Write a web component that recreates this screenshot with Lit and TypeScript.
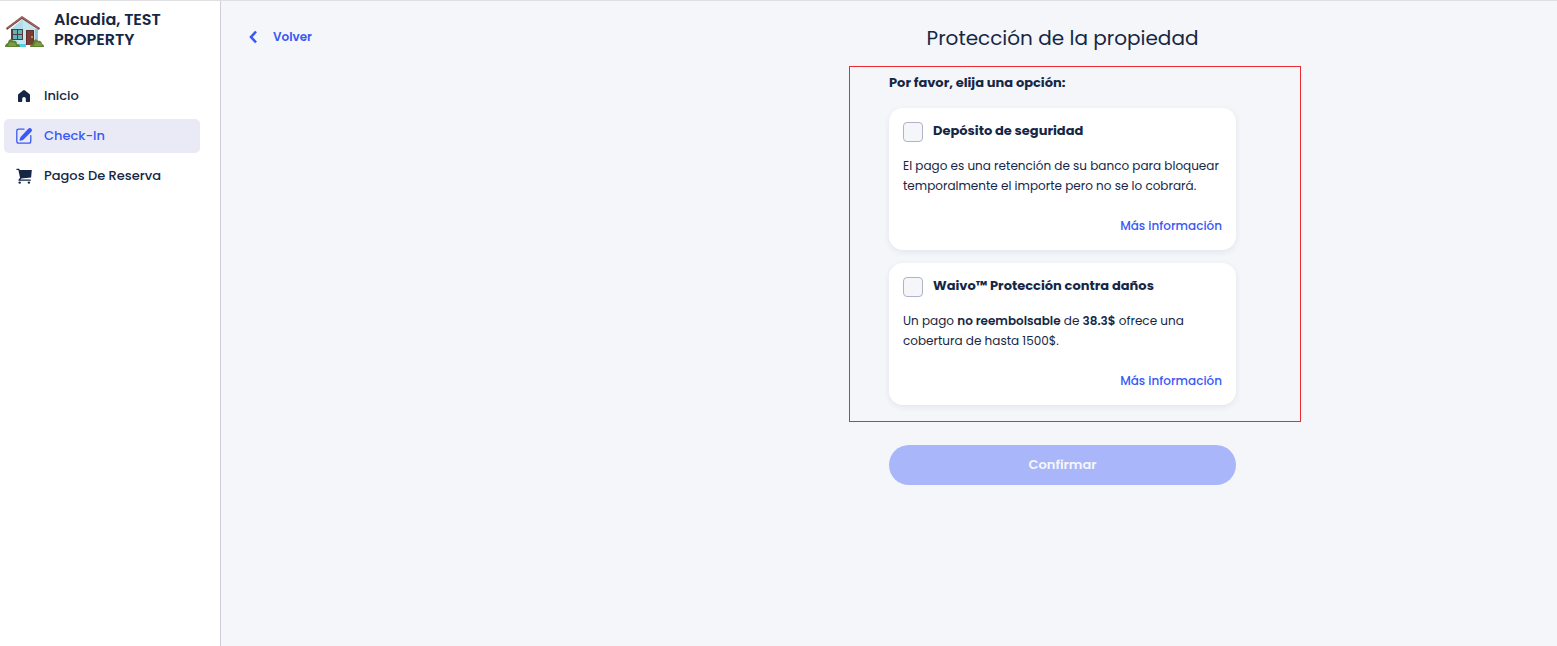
import { LitElement, html, css, svg } from "lit";
import { customElement, property } from "lit/decorators.js";

const houseLogo = svg`
  <svg class="logo" viewBox="-1 -3 40 34" aria-hidden="true">
    <path d="M6 13 18 3l15 10v16H6z" fill="#c3e6f0"/>
    <path d="M6 13 18 3v9L8 27H6z" fill="#b1dce9"/>
    <path d="M30 13h3v14h-3z" fill="#94c6d8"/>
    <path d="M12 28h9v3h-9z" fill="#54cfe6"/>
    <path d="M1 12 17 0l18 12-1 2L17 3 2 14z" fill="#804a44"/>
    <path d="M3 12 17 1l16 11" fill="none" stroke="#a86b60" stroke-width="1"/>
    <rect x="6" y="13" width="12" height="11" fill="#563b3d"/>
    <path d="M8 14h4v4H8zM13 14h4v4h-4zM8 19h4v4H8zM13 19h4v4h-4z" fill="#61b5b8"/>
    <rect x="21" y="14" width="8" height="15" fill="#5e2d2a"/>
    <rect x="22" y="15" width="6" height="14" fill="#7c3c33"/>
    <circle cx="27" cy="21" r="1" fill="#d8a65c"/>
    <path d="M0 31c0-3 2-4 3-4 0-4 4-5 5-2 3-1 4 1 4 3 2 0 3 1 3 3z" fill="#5f8132"/>
    <path d="M3 30c1-3 3-5 5-3 2-1 3 1 3 3z" fill="#7d9d42"/>
    <path d="M25 31c0-2 1-3 3-3 0-4 3-6 5-3 2-1 4 1 4 3 1 0 2 1 2 3z" fill="#5f8132"/>
    <path d="M29 30c1-4 3-5 5-3 2-1 3 1 3 3z" fill="#7d9d42"/>
  </svg>`;

const icons = {
  home: svg`<svg class="icon" viewBox="0 0 16 16" aria-hidden="true">
    <path fill="currentColor" d="M7 2.400a1.600 1.600 0 0 1 2 0l4.400 3.600c.4.300.6.800.6 1.300V13c0 .6-.4 1-1 1h-2.200c-.6 0-1-.4-1-1v-2.200a1.800 1.800 0 0 0-3.600 0V13c0 .6-.4 1-1 1H3c-.6 0-1-.4-1-1V7.300c0-.5.2-1 .6-1.300z"/>
  </svg>`,
  edit: svg`<svg class="icon" viewBox="0 0 16 16" aria-hidden="true">
    <path fill="none" stroke="currentColor" stroke-width="1.300" stroke-linecap="round" d="M8 1.200H2.700C1.600 1.200.8 2 .8 3v10.300c0 1 .8 1.900 1.900 1.900h10.200c1 0 1.900-.9 1.900-1.900V7.600"/>
    <path fill="currentColor" d="M12.200.8c.9-.9 2.300-.9 3.100-.1.900.9.900 2.200 0 3.100L7.600 11.600c-.2.200-.4.300-.6.400l-2.600.8c-.6.200-1-.3-.9-.9l.9-2.600c.1-.2.200-.4.400-.6z"/>
  </svg>`,
  cart: svg`<svg class="icon" viewBox="0 0 16 16" aria-hidden="true">
    <path fill="currentColor" d="M3.200 2H15.800L15.100 9.500 4.800 10.500z"/>
    <path fill="none" stroke="currentColor" stroke-width="1.300" stroke-linecap="round" stroke-linejoin="round" d="M.9 1.300h2L4.800 10l-1.800 2.200h11.300"/>
    <circle cx="3.700" cy="14.600" r="1.200" fill="currentColor"/>
    <circle cx="12.900" cy="14.600" r="1.200" fill="currentColor"/>
  </svg>`,
};

@customElement("protection-option")
class ProtectionOption extends LitElement {
  @property() heading = "";

  static styles = css`
    :host {
      display: block;
      padding: 14px;
      border-radius: 14px;
      background: #fff;
      box-shadow: 0 2px 6px rgba(21, 39, 69, 0.08);
    }
    .choice {
      display: flex;
      align-items: center;
      gap: 10px;
      font-size: 13px;
      font-weight: 700;
      line-height: 18px;
    }
    .choice span {
      align-self: flex-start;
    }
    .box {
      appearance: none;
      flex: none;
      box-sizing: border-box;
      width: 20px;
      height: 20px;
      margin: 0;
      border: 1px solid #b2b1c7;
      border-radius: 4px;
      background: #f5f6fa;
    }
    .box:checked {
      background: #3a5af5;
    }
    .text {
      margin: 14px 0 20px;
      font-size: 12px;
      font-weight: 400;
      line-height: 20px;
    }
    ::slotted(b) {
      font-weight: 600;
    }
    .more {
      display: block;
      width: fit-content;
      margin-left: auto;
      color: #3a5af5;
      font-size: 12px;
      font-weight: 500;
      line-height: 20px;
      text-decoration: none;
    }
  `;

  render() {
    return html`
      <label class="choice"><input class="box" type="checkbox" /><span>${this.heading}</span></label>
      <p class="text"><slot></slot></p>
      <a class="more" href="#">Más información</a>
    `;
  }
}

@customElement("app-root")
class AppRoot extends LitElement {
  static styles = css`
    * {
      box-sizing: border-box;
    }
    :host {
      display: flex;
      box-sizing: border-box;
      min-height: 100vh;
      border-top: 1px solid #e0e0e2;
      background: #f5f6fa;
      color: #152745;
      font-family: Poppins, Inter, sans-serif;
    }
    .sidebar {
      flex: none;
      width: 221px;
      padding: 9px 20px 0 4px;
      border-right: 1px solid #cfcfdc;
      background: #fff;
    }
    .brand {
      display: flex;
      align-items: center;
      gap: 10px;
      font-size: 16px;
      font-weight: 600;
      line-height: 20px;
    }
    .logo {
      flex: none;
      width: 40px;
      height: 34px;
    }
    .nav {
      display: grid;
      gap: 6px;
      margin-top: 29px;
    }
    .link {
      display: flex;
      align-items: center;
      gap: 12px;
      height: 34px;
      padding: 0 12px;
      border-radius: 5px;
      color: inherit;
      font-size: 13px;
      font-weight: 500;
      line-height: 20px;
      text-decoration: none;
    }
    .active {
      background: #eae9f6;
      color: #3a5af5;
    }
    .icon {
      width: 16px;
      height: 16px;
    }
    .main {
      flex: 1;
      display: grid;
      grid-template-columns: 1fr 1fr;
      align-items: start;
      padding-top: 22px;
    }
    .back {
      display: flex;
      align-items: center;
      gap: 14px;
      width: fit-content;
      height: 28px;
      margin-left: 28px;
      padding: 0;
      border: 0;
      background: none;
      color: #3a5af5;
      font: inherit;
      font-size: 12px;
      font-weight: 600;
    }
    .chevron {
      width: 10px;
      height: 14px;
    }
    .panel {
      max-width: 347px;
    }
    .title {
      margin: 0 0 20px;
      font-size: 20px;
      font-weight: 400;
      line-height: 30px;
      text-align: center;
      white-space: nowrap;
    }
    .options {
      position: relative;
      display: grid;
      gap: 13px;
      margin: 0 0 40px;
    }
    .options::after {
      content: "";
      position: absolute;
      inset: -7px -65px -17px -40px;
      border: 1px solid #ec2b30;
      pointer-events: none;
    }
    .prompt {
      margin: 0 0 2px;
      font-size: 13px;
      font-weight: 700;
      line-height: 20px;
    }
    .confirm {
      width: 100%;
      height: 40px;
      border: 0;
      border-radius: 20px;
      background: #a9b7fa;
      color: #f5f6fa;
      font: inherit;
      font-size: 13px;
      font-weight: 600;
    }
  `;

  render() {
    return html`
      <aside class="sidebar">
        <div class="brand">${houseLogo}<span>Alcudia, TEST PROPERTY</span></div>
        <nav class="nav">
          <a class="link" href="#">${icons.home}Inicio</a>
          <a class="link active" href="#" aria-current="page">${icons.edit}Check-In</a>
          <a class="link" href="#">${icons.cart}Pagos De Reserva</a>
        </nav>
      </aside>
      <main class="main">
        <button class="back" type="button">
          <svg class="chevron" viewBox="0 0 10 14" aria-hidden="true">
            <path d="M7 1.500 2 7l5 5.500" fill="none" stroke="currentColor" stroke-width="2.600" />
          </svg>
          Volver
        </button>
        <div class="panel">
          <h1 class="title">Protección de la propiedad</h1>
          <section class="options">
            <h2 class="prompt">Por favor, elija una opción:</h2>
            <protection-option heading="Depósito de seguridad"
              >El pago es una retención de su banco para bloquear temporalmente el importe pero no se lo cobrará.</protection-option>
            <protection-option heading="Waivo™ Protección contra daños"
              >Un pago <b>no reembolsable</b> de <b>38.3$</b> ofrece una cobertura de hasta 1500$.</protection-option>
          </section>
          <button class="confirm" type="button" disabled>Confirmar</button>
        </div>
      </main>
    `;
  }
}
